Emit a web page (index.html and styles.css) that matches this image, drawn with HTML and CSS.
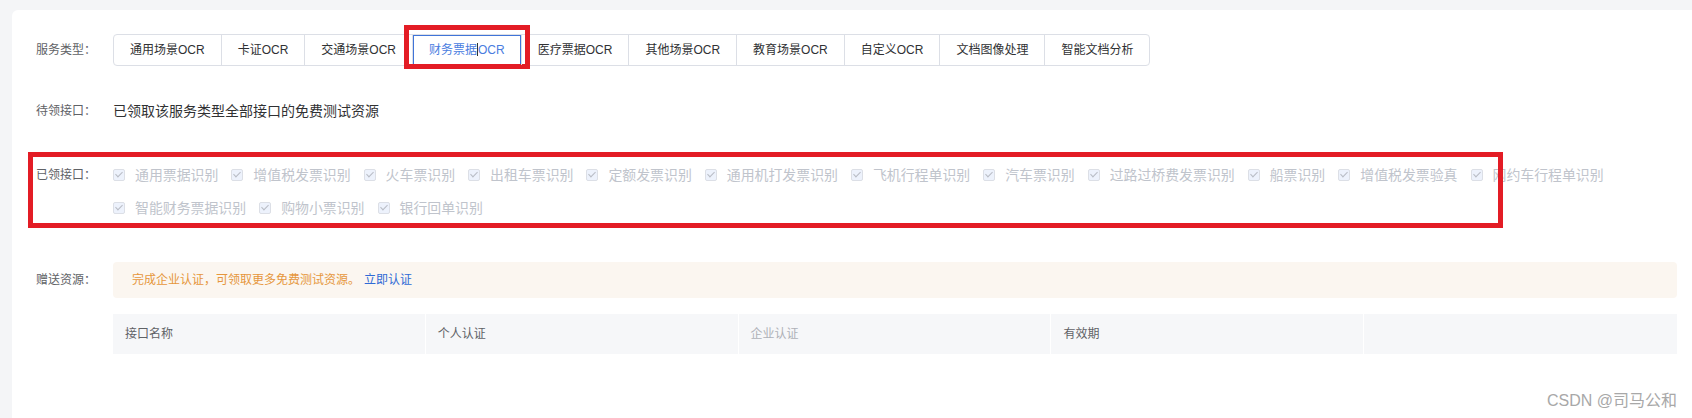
FILE: index.html
```html
<!DOCTYPE html>
<html lang="zh-CN">
<head>
  <meta charset="UTF-8">
  <meta name="viewport" content="width=device-width, initial-scale=1.0">
  <title>免费测试资源</title>
  <link rel="stylesheet" href="styles.css">
</head>
<body>

  <div class="panel">
    <div class="form-item row-tabs">
      <div class="form-label">服务类型：</div>
      <div class="tabs">
        <span class="tab">通用场景OCR</span>
        <span class="tab">卡证OCR</span>
        <span class="tab">交通场景OCR</span>
        <span class="tab active">财务票据<i class="caret"></i>OCR<b class="mark mark-tab"></b></span>
        <span class="tab">医疗票据OCR</span>
        <span class="tab">其他场景OCR</span>
        <span class="tab">教育场景OCR</span>
        <span class="tab">自定义OCR</span>
        <span class="tab">文档图像处理</span>
        <span class="tab">智能文档分析</span>
      </div>
    </div>

    <div class="form-item row-pending">
      <div class="form-label">待领接口：</div>
      <div class="pending-text">已领取该服务类型全部接口的免费测试资源</div>
    </div>

    <div class="form-item row-claimed">
      <div class="form-label">已领接口：</div>
      <div class="checks">
        <label class="check"><span class="box"></span>通用票据识别</label>
        <label class="check"><span class="box"></span>增值税发票识别</label>
        <label class="check"><span class="box"></span>火车票识别</label>
        <label class="check"><span class="box"></span>出租车票识别</label>
        <label class="check"><span class="box"></span>定额发票识别</label>
        <label class="check"><span class="box"></span>通用机打发票识别</label>
        <label class="check"><span class="box"></span>飞机行程单识别</label>
        <label class="check"><span class="box"></span>汽车票识别</label>
        <label class="check"><span class="box"></span>过路过桥费发票识别</label>
        <label class="check"><span class="box"></span>船票识别</label>
        <label class="check"><span class="box"></span>增值税发票验真</label>
        <label class="check"><span class="box"></span>网约车行程单识别</label>
        <label class="check"><span class="box"></span>智能财务票据识别</label>
        <label class="check"><span class="box"></span>购物小票识别</label>
        <label class="check"><span class="box"></span>银行回单识别</label>
      </div>
      <b class="mark mark-claimed"></b>
    </div>

    <div class="form-item row-alert">
      <div class="form-label">赠送资源：</div>
      <div class="alert">完成企业认证，可领取更多免费测试资源。<a class="link">立即认证</a></div>
    </div>

    <div class="table-head">
      <div class="th">接口名称</div>
      <div class="th">个人认证</div>
      <div class="th th-muted">企业认证</div>
      <div class="th">有效期</div>
      <div class="th"></div>
    </div>

    <div class="watermark">CSDN @司马公和</div>
  </div>

</body>
</html>
```

FILE: styles.css
```css
body {
  margin: 0;
  background-color: #f4f5f7;
  font-family: "Liberation Sans", "Noto Sans CJK SC", sans-serif;
  overflow: hidden;
}

.panel {
  position: relative;
  box-sizing: border-box;
  height: 408px;
  margin: 10px 0 0 12px;
  padding: 24px 15px 0 24px;
  background-color: #fff;
  border-radius: 6px 0 0 0;
}

.form-item {
  display: flex;
  align-items: flex-start;
}

.form-label {
  width: 77px;
  flex-shrink: 0;
  font-size: 12px;
  line-height: 20px;
  color: #606266;
}

/* tabs */
.row-tabs .form-label {
  line-height: 32px;
}

.tabs {
  display: flex;
  border: 1px solid #dcdfe6;
  border-radius: 4px;
}

.tab {
  position: relative;
  height: 30px;
  line-height: 30px;
  padding: 0 16px;
  font-size: 12px;
  color: #303133;
  border-left: 1px solid #dcdfe6;
}

.tab:first-child {
  border-left: none;
}

.tab.active {
  color: #4a7ddf;
  box-shadow: inset 0 0 0 1px #3f74d8;
}

.caret {
  display: inline-block;
  width: 1px;
  height: 13px;
  background-color: #333;
  vertical-align: -2px;
}

/* red annotation boxes */
.mark {
  position: absolute;
  border: 5px solid #e31c25;
  pointer-events: none;
}

.mark-tab {
  left: -9px;
  right: -9px;
  top: -10px;
  bottom: -4px;
}

.row-pending {
  margin-top: 35px;
}

.pending-text {
  font-size: 14px;
  line-height: 20px;
  color: #303133;
}

/* claimed checkboxes */
.row-claimed {
  position: relative;
  margin-top: 44px;
}

.mark-claimed {
  left: -8px;
  right: 174px;
  top: -13px;
  bottom: -10px;
}

.checks {
  display: flex;
  flex-wrap: wrap;
  column-gap: 13px;
  row-gap: 13px;
}

.check {
  display: flex;
  align-items: center;
  font-size: 13.9px;
  line-height: 20px;
  color: #c0c4cc;
}

.box {
  position: relative;
  box-sizing: border-box;
  width: 12px;
  height: 12px;
  margin-right: 10px;
  border: 1px solid #dcdfe6;
  border-radius: 2px;
  background-color: #edf2fc;
}

.box::after {
  content: "";
  position: absolute;
  left: 3px;
  top: 0px;
  width: 3px;
  height: 6px;
  border-right: 1px solid #b8bcc4;
  border-bottom: 1px solid #b8bcc4;
  transform: rotate(45deg);
}

/* alert */
.row-alert {
  margin-top: 44px;
}

.row-alert .form-label {
  line-height: 36px;
}

.alert {
  flex: 1;
  height: 36px;
  line-height: 36px;
  padding-left: 19px;
  font-size: 12px;
  color: #e6963c;
  background-color: #fbf6f0;
  border-radius: 4px;
}

.link {
  margin-left: 4px;
  color: #2f6bd6;
}

/* table header */
.table-head {
  display: grid;
  grid-template-columns: repeat(5, 1fr);
  margin: 16px 0 0 77px;
  background-color: #f6f7f9;
}

.th {
  height: 40px;
  line-height: 40px;
  padding-left: 12px;
  font-size: 12px;
  color: #606266;
  border-right: 1px solid #fff;
}

.th:last-child {
  border-right: none;
}

.th-muted {
  color: #aeb1b7;
}

.watermark {
  position: absolute;
  right: 15px;
  bottom: 7px;
  font-size: 16px;
  line-height: 20px;
  color: #a8a8a8;
}
```
